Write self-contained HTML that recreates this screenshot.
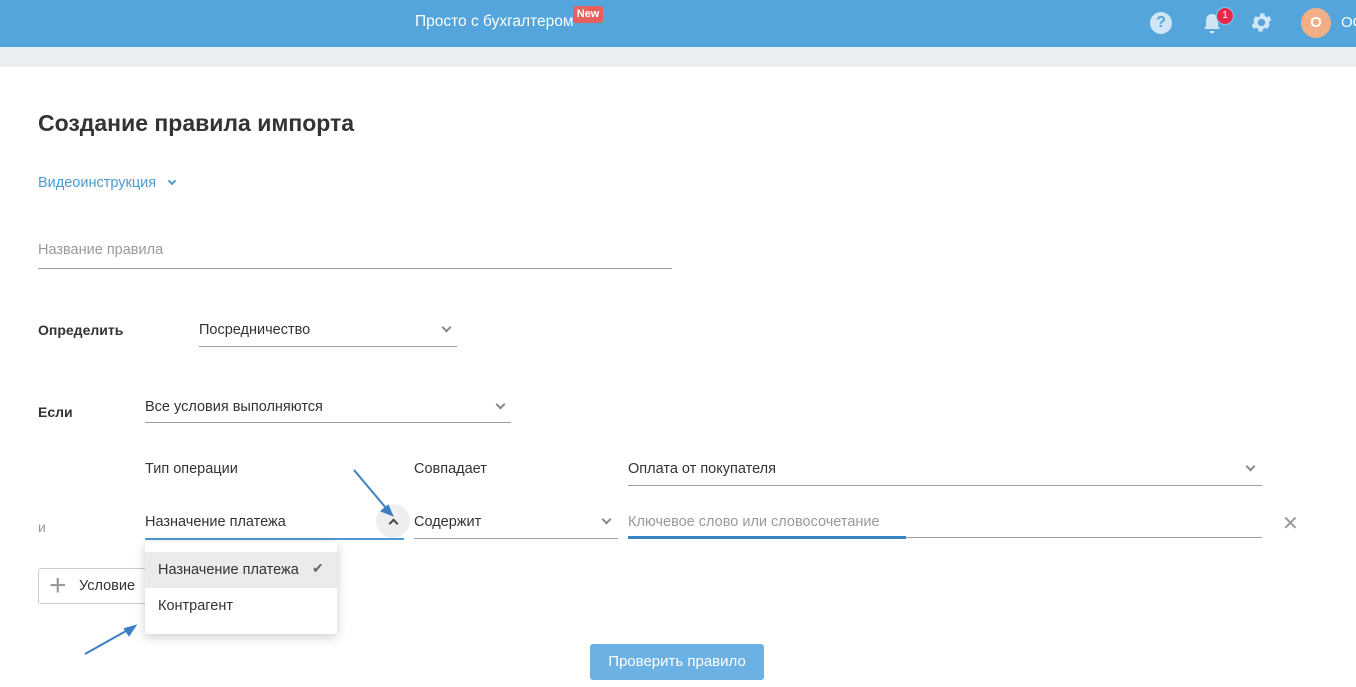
<!DOCTYPE html>
<html><head><meta charset="utf-8"><style>
*{box-sizing:border-box;margin:0;padding:0}
body{width:1356px;height:687px;overflow:hidden;background:#fff;font-family:"Liberation Sans",sans-serif;color:#333;position:relative}
.a{position:absolute}
.hdr{left:0;top:0;width:1356px;height:47px;background:#53a5db}
.strip{left:0;top:47px;width:1356px;height:20px;background:#eceff2}
.line{position:absolute;height:1px;background:#9e9e9e}
.t{position:absolute;font-size:15px;white-space:nowrap}
.chev{position:absolute;width:7px;height:7px;border-right:2px solid #888;border-bottom:2px solid #888;transform:rotate(45deg)}
</style></head><body>
<div class="a hdr"></div>
<div class="a strip"></div>
<div class="t" style="left:415px;top:13px;color:#fff;font-size:15.5px">Просто с бухгалтером</div>
<div class="a" style="left:573px;top:6px;width:30px;height:17px;background:#e8605d;border-radius:3px;color:#fff;font-size:11px;font-weight:bold;text-align:center;line-height:17px">New</div>
<div class="a" style="left:1150px;top:12px;width:22px;height:22px;border-radius:50%;background:#cfe5f6;color:#53a5db;font-weight:bold;font-size:16px;text-align:center;line-height:22px">?</div>
<svg class="a" style="left:1200px;top:11px" width="24" height="24" viewBox="0 0 24 24"><path d="M12 3c-4 0-6 3-6 7v5l-2 3h16l-2-3v-5c0-4-2-7-6-7z M9.5 20a2.5 2.5 0 0 0 5 0z" fill="#cfe5f6"/></svg>
<div class="a" style="left:1216px;top:7px;width:18px;height:18px;border-radius:50%;background:#e52a4a;border:1px solid #8cc4ea;color:#fff;font-size:10px;text-align:center;line-height:16px">1</div>
<svg class="a" style="left:1249px;top:10px" width="25" height="25" viewBox="0 0 24 24"><path fill="#cfe5f6" d="M19.4 13a7.5 7.5 0 0 0 0-2l2.1-1.6-2-3.5-2.5 1a7 7 0 0 0-1.700-1l-.4-2.7h-4l-.4 2.7a7 7 0 0 0-1.7 1l-2.5-1-2 3.5L4.6 11a7.5 7.5 0 0 0 0 2l-2.1 1.6 2 3.5 2.5-1a7 7 0 0 0 1.7 1l.4 2.7h4l.4-2.7a7 7 0 0 0 1.7-1l2.5 1 2-3.5zM12 15.5A3.5 3.5 0 1 1 12 8.5a3.5 3.5 0 0 1 0 7z"/></svg>
<div class="a" style="left:1301px;top:8px;width:30px;height:30px;border-radius:50%;background:#f2ae86;color:#fff;font-weight:bold;font-size:15px;text-align:center;line-height:30px">О</div>
<div class="t" style="left:1341px;top:14px;color:#fff">ОО</div>

<div class="t" style="left:38px;top:110px;font-size:23px;color:#333;font-weight:600">Создание правила импорта</div>
<div class="t" style="left:38px;top:175px;color:#4a9ad4;font-size:14.5px">Видеоинструкция</div>
<div class="chev" style="left:169px;top:178px;border-color:#4a9ad4;width:6px;height:6px"></div>
<div class="t" style="left:38px;top:242px;color:#999;font-size:14.5px">Название правила</div>
<div class="line" style="left:38px;top:268px;width:634px"></div>

<div class="t" style="left:38px;top:322px;font-weight:bold;font-size:14px">Определить</div>
<div class="t" style="left:199px;top:322px;font-size:14.5px">Посредничество</div>
<div class="chev" style="left:443px;top:324px"></div>
<div class="line" style="left:199px;top:346px;width:258px"></div>

<div class="t" style="left:38px;top:404px;font-weight:bold;font-size:14px">Если</div>
<div class="t" style="left:145px;top:399px;font-size:14.5px">Все условия выполняются</div>
<div class="chev" style="left:497px;top:401px"></div>
<div class="line" style="left:145px;top:422px;width:366px"></div>

<div class="t" style="left:145px;top:461px;font-size:14.5px">Тип операции</div>
<div class="t" style="left:414px;top:461px;font-size:14.5px">Совпадает</div>
<div class="t" style="left:628px;top:461px;font-size:14.5px">Оплата от покупателя</div>
<div class="chev" style="left:1247px;top:463px"></div>
<div class="line" style="left:628px;top:485px;width:634px"></div>

<div class="t" style="left:38px;top:519px;color:#999;font-size:14px">и</div>
<div class="t" style="left:145px;top:514px;font-size:14.5px">Назначение платежа</div>
<div class="a" style="left:376px;top:504px;width:34px;height:34px;border-radius:50%;background:#eee"></div>
<div class="chev" style="left:390px;top:520px;transform:rotate(225deg);border-color:#444"></div>
<div class="a" style="left:145px;top:538px;width:259px;height:2px;background:#4a9ad4"></div>
<div class="t" style="left:414px;top:514px;font-size:14.5px">Содержит</div>
<div class="chev" style="left:603px;top:516px"></div>
<div class="line" style="left:414px;top:538px;width:204px"></div>
<div class="t" style="left:628px;top:514px;color:#999;font-size:14.5px">Ключевое слово или словосочетание</div>
<div class="line" style="left:628px;top:537px;width:634px"></div>
<div class="a" style="left:628px;top:536px;width:278px;height:3px;background:#3b84c4"></div>
<div class="t" style="left:1282px;top:511px;color:#999;font-size:20px">✕</div>

<div class="a" style="left:38px;top:568px;width:120px;height:36px;border:1px solid #ccc;border-radius:3px"></div>
<div class="t" style="left:49px;top:569px;font-size:30px;color:#999;font-weight:300">+</div>
<div class="t" style="left:79px;top:578px;font-size:14.5px">Условие</div>

<div class="a" style="left:145px;top:542px;width:192px;height:92px;background:#fff;box-shadow:0 3px 10px rgba(0,0,0,.2)"></div>
<div class="a" style="left:145px;top:552px;width:192px;height:36px;background:#ebebeb"></div>
<div class="t" style="left:158px;top:562px;font-size:14.5px">Назначение платежа</div>
<div class="t" style="left:312px;top:560px;font-size:14px;color:#666">✔</div>
<div class="t" style="left:158px;top:598px;font-size:14.5px">Контрагент</div>

<svg class="a" style="left:0;top:0" width="1356" height="687"><g stroke="#3b7fc4" stroke-width="2" fill="#3b7fc4"><line x1="354" y1="470" x2="386" y2="508"/><path d="M392 515l-10-4 6-5z"/><line x1="85" y1="654" x2="126" y2="631"/><path d="M135 626l-6 9-4-6z"/></g></svg>

<div class="a" style="left:590px;top:644px;width:174px;height:36px;background:#6cb1e3;border-radius:3px;color:#fff;font-size:15px;text-align:center;line-height:36px">Проверить правило</div>
</body></html>
